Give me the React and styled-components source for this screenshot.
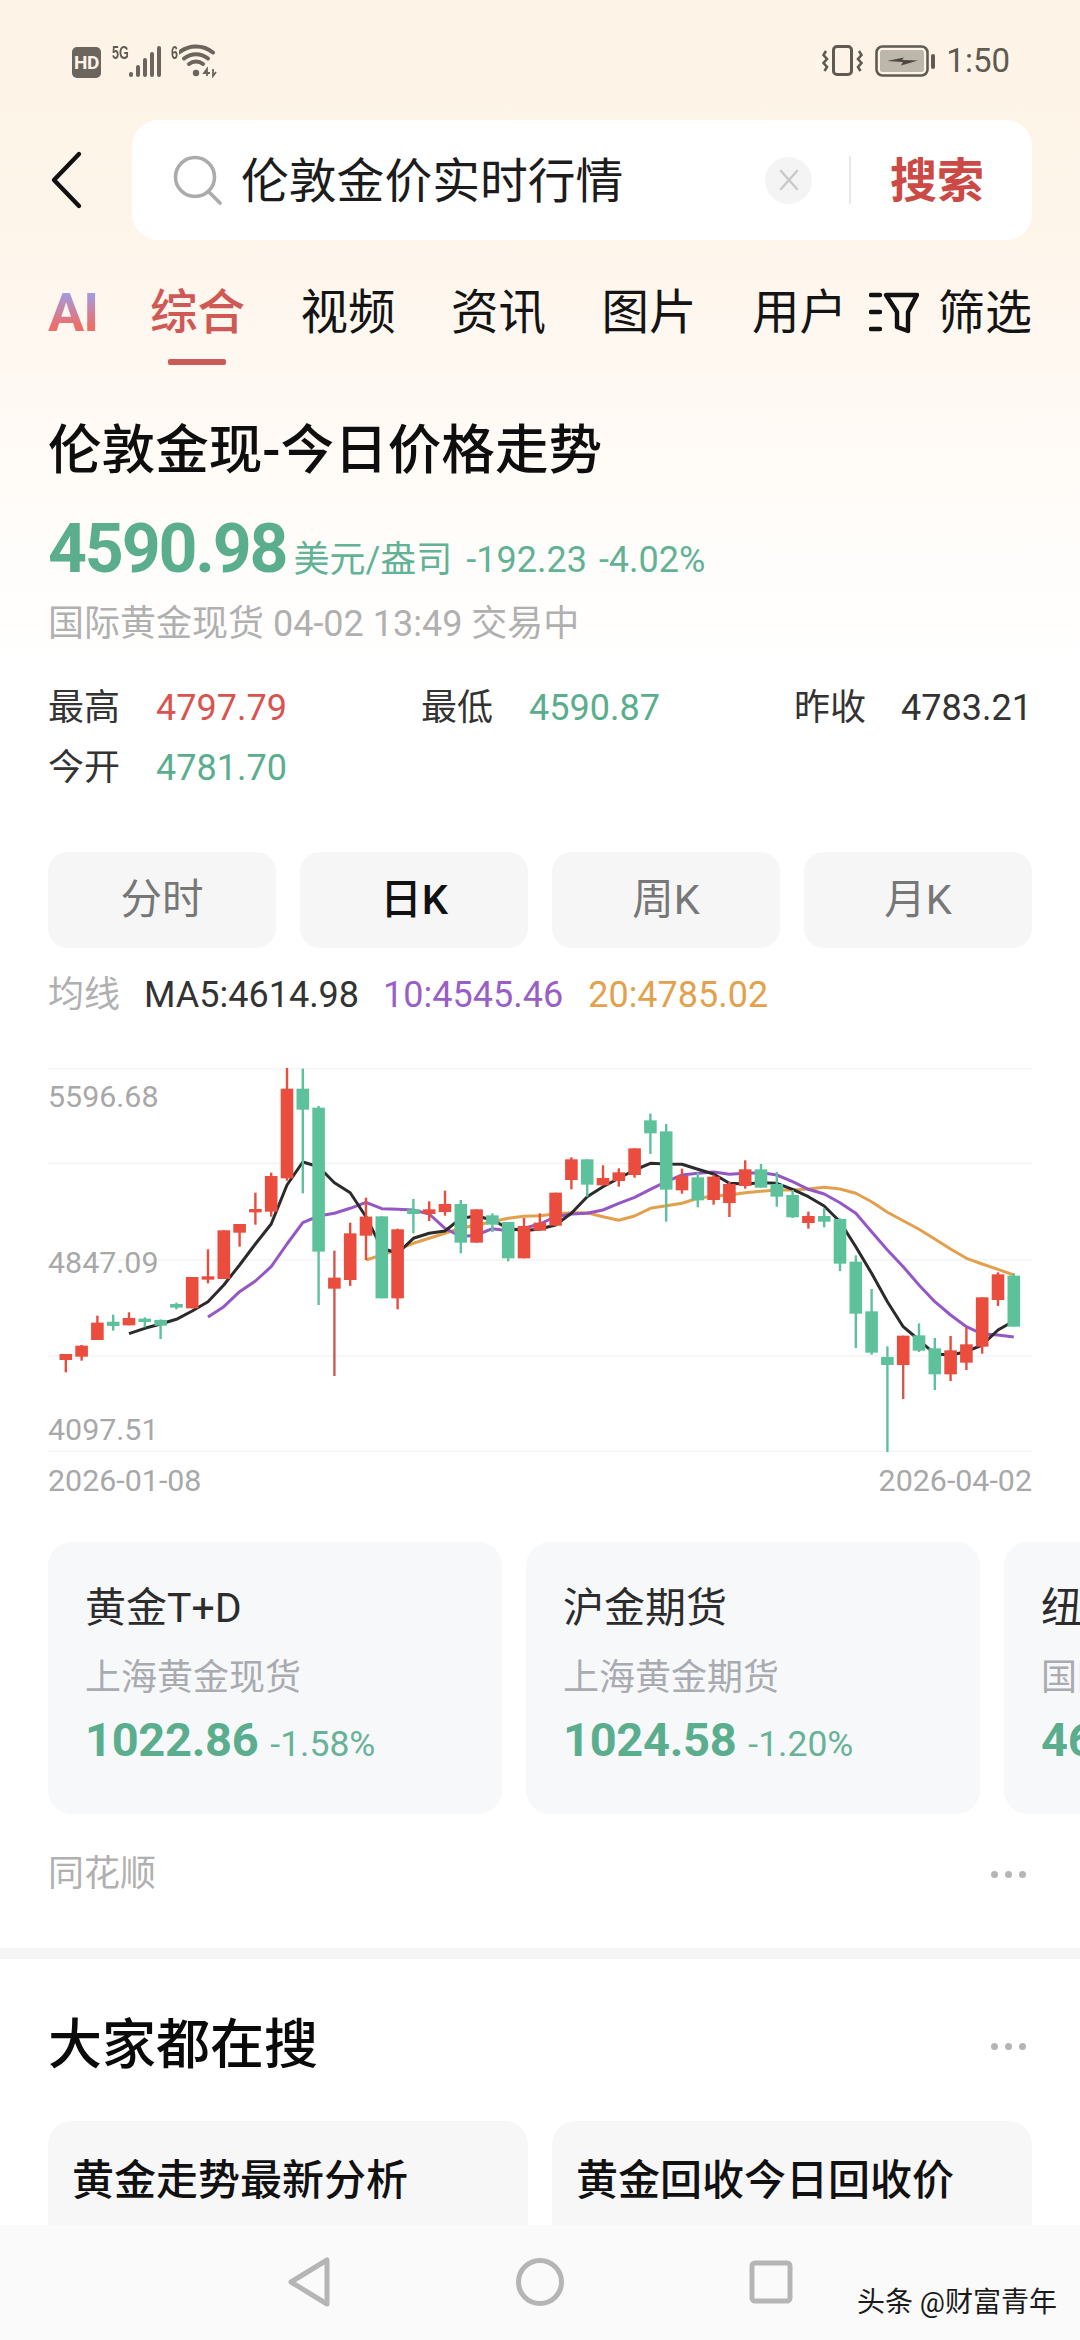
import React from "react";
import styled, { createGlobalStyle } from "styled-components";

const GlobalStyle = createGlobalStyle`
  html, body { margin: 0; padding: 0; background: #fff; }
  * { box-sizing: border-box; }
  body { font-family: Roboto, "Noto Sans CJK SC", sans-serif; }
`;

const GREEN = "#5aae8e";
const RED = "#d9534f";
const GREY = "#b0b0b0";
const STATUS = "#5f5a52";

const Page = styled.div`
  position: relative;
  width: 1080px;
  height: 2340px;
  overflow: hidden;
  background: linear-gradient(#fdf3e6 0, #fef5ea 220px, #fffaf5 430px, #fffdfb 560px, #fff 680px);
`;

const StatusBar = styled.div`
  height: 120px;
  padding: 45px 70px 0 72px;
  display: flex;
  justify-content: space-between;
  align-items: flex-start;
`;
const StatusGroup = styled.div`
  display: flex;
  align-items: flex-start;
`;
const HdBadge = styled.span`
  width: 29px;
  height: 31px;
  margin-top: 2px;
  border-radius: 5px;
  background: #6b655d;
  color: #fdf3e6;
  font: 700 19px/31px Roboto, sans-serif;
  letter-spacing: -0.5px;
  text-align: center;
`;
const TinyText = styled.span`
  font: 700 18px/16px "Liberation Sans", sans-serif;
  color: ${STATUS};
  margin-left: ${(p) => p.$left}px;
  transform: scaleX(0.7);
  transform-origin: left top;
  width: ${(p) => p.$w}px;
`;
const StatusTime = styled.span`
  font: 400 33px/32px Roboto, sans-serif;
  color: ${STATUS};
  margin-left: 10px;
`;

const SearchRow = styled.div`
  height: 120px;
  padding: 0 48px;
  display: flex;
  align-items: center;
`;
const BackButton = styled.div`
  width: 84px;
  height: 60px;
  flex: none;
`;
const SearchBox = styled.div`
  flex: 1;
  height: 120px;
  background: #fff;
  border-radius: 26px;
  display: flex;
  align-items: center;
  padding-left: 41px;
`;
const QueryText = styled.div`
  flex: 1;
  margin: 3px 0 0 18px;
  font-size: 47.8px;
  line-height: 60px;
  color: #1c1c1c;
  white-space: nowrap;
`;
const ClearButton = styled.div`
  width: 47px;
  height: 47px;
  border-radius: 50%;
  background: #f4f4f4;
  display: flex;
  align-items: center;
  justify-content: center;
`;
const SearchDivider = styled.div`
  width: 2px;
  height: 48px;
  margin-left: 37px;
  background: #e8e8e8;
`;
const SearchAction = styled.div`
  margin: 2px 48px 0 39px;
  font-size: 47px;
  line-height: 60px;
  font-weight: 700;
  color: #cc4a46;
  white-space: nowrap;
`;

const TabBar = styled.div`
  height: 146px;
  padding: 0 48px;
  display: flex;
  align-items: center;
`;
const AiTab = styled.div`
  width: 102px;
  font: 700 54px/60px Roboto, sans-serif;
  letter-spacing: -1px;
  background: linear-gradient(#9aa0ec 12%, #ee6e6a 72%);
  -webkit-background-clip: text;
  background-clip: text;
  color: transparent;
`;
const Tab = styled.div`
  position: relative;
  width: 94px;
  margin-right: ${(p) => p.$gap ?? 56.5}px;
  font-size: 47.5px;
  line-height: 60px;
  white-space: nowrap;
  color: ${(p) => (p.$active ? "#cf5a55" : "#141414")};
  font-weight: ${(p) => (p.$active ? 500 : 400)};
`;
const TabMark = styled.span`
  position: absolute;
  left: 18px;
  top: 76px;
  width: 58px;
  height: 6px;
  border-radius: 2px;
  background: #cb5b57;
`;
const FilterTab = styled.div`
  display: flex;
  align-items: center;
  margin-left: auto;
  font-size: 47px;
  line-height: 60px;
  color: #141414;
  white-space: nowrap;
`;

const Content = styled.div`
  padding: 0 48px;
`;
const Title = styled.h1`
  margin: 27px 0 0;
  font-size: 53.6px;
  line-height: 76px;
  font-weight: 500;
  color: #0e0e0e;
  white-space: nowrap;
`;
const PriceRow = styled.div`
  height: 110px;
  display: flex;
  align-items: baseline;
  padding-top: 19px;
  color: ${GREEN};
  white-space: nowrap;
`;
const Price = styled.span`
  font: 700 68px/82px Roboto, sans-serif;
  letter-spacing: -2.2px;
  margin-right: 7px;
`;
const PriceNote = styled.span`
  font-size: 36px;
  line-height: 50px;
  margin-right: ${(p) => p.$gap}px;
  color: #62b295;
`;
const SubLine = styled.div`
  font-size: 36px;
  line-height: 50px;
  color: ${GREY};
  white-space: nowrap;
`;
const Stats = styled.div`
  margin-top: 29px;
  display: grid;
  grid-template-columns: 373px 373px 1fr;
`;
const Stat = styled.div`
  display: flex;
  font-size: 36px;
  line-height: 60px;
  white-space: nowrap;
  justify-content: ${(p) => (p.$end ? "space-between" : "flex-start")};
  color: #333;
`;
const StatValue = styled.span`
  margin-left: ${(p) => (p.$end ? 0 : 36)}px;
  color: ${(p) => p.$color};
`;
const KTabs = styled.div`
  margin-top: 54px;
  display: grid;
  grid-template-columns: repeat(4, 228px);
  gap: 24px;
`;
const KTab = styled.div`
  height: 96px;
  padding-bottom: 8px;
  border-radius: 20px;
  background: #f6f6f6;
  display: flex;
  align-items: center;
  justify-content: center;
  font-size: 41.5px;
  color: ${(p) => (p.$active ? "#111" : "#777")};
  font-weight: ${(p) => (p.$active ? 500 : 400)};
`;
const MaRow = styled.div`
  margin-top: 22px;
  height: 50px;
  display: flex;
  font-size: 36px;
  line-height: 50px;
  white-space: nowrap;
`;
const MaItem = styled.span`
  color: ${(p) => p.$color};
  margin-right: ${(p) => p.$gap}px;
`;
const ChartBox = styled.div`
  position: relative;
  margin-top: 48px;
  height: 384px;
`;
const AxisLabel = styled.span`
  position: absolute;
  left: 0;
  top: ${(p) => p.$top}px;
  font-size: 30.4px;
  line-height: 36px;
  color: #a8a8a8;
`;
const DateRow = styled.div`
  margin-top: 9px;
  display: flex;
  justify-content: space-between;
  font-size: 30.4px;
  line-height: 40px;
  color: #a8a8a8;
`;
const CardStrip = styled.div`
  margin: 41px -48px 0 0;
  display: flex;
  gap: 24px;
  overflow: hidden;
`;
const QuoteCard = styled.div`
  flex: none;
  width: 454px;
  height: 272px;
  padding: 41px 0 0 37px;
  border-radius: 24px;
  background: #f7f8fa;
  white-space: nowrap;
`;
const QuoteTitle = styled.div`
  font-size: 41px;
  line-height: 50px;
  color: #2c2c2c;
`;
const QuoteSub = styled.div`
  margin-top: 20px;
  font-size: 36px;
  line-height: 50px;
  color: #a9abb0;
`;
const QuoteLine = styled.div`
  margin-top: 6px;
  display: flex;
  align-items: baseline;
  line-height: 62px;
  color: ${GREEN};
`;
const QuoteValue = styled.span`
  font-size: 47px;
  font-weight: 700;
  letter-spacing: -0.3px;
`;
const QuoteChange = styled.span`
  margin-left: 12px;
  font-size: 35.5px;
  color: #68b398;
`;
const SourceRow = styled.div`
  margin-top: 35px;
  height: 50px;
  display: flex;
  align-items: center;
  justify-content: space-between;
  font-size: 36px;
  line-height: 50px;
  color: #b0b0b0;
`;
const Dots = styled.div`
  display: flex;
  gap: 7px;
  margin-right: 6px;
`;
const Dot = styled.i`
  width: 7px;
  height: 7px;
  border-radius: 50%;
  background: #b5b5b5;
`;
const SectionGap = styled.div`
  margin-top: 49px;
  height: 11px;
  background: #f5f5f5;
`;
const SectionHead = styled.div`
  margin-top: 49px;
  height: 76px;
  display: flex;
  align-items: center;
  justify-content: space-between;
`;
const SectionTitle = styled.h2`
  margin: 0;
  font-size: 54px;
  line-height: 76px;
  font-weight: 500;
  color: #0a0a0a;
`;
const HotGrid = styled.div`
  margin-top: 37px;
  display: grid;
  grid-template-columns: 480px 480px;
  gap: 24px;
`;
const HotCard = styled.div`
  height: 190px;
  padding: 36px 0 0 24px;
  border-radius: 24px;
  background: #f7f7f7;
  font-size: 42px;
  line-height: 48px;
  font-weight: 500;
  color: #111;
  white-space: nowrap;
`;
const NavBar = styled.div`
  position: absolute;
  left: 0;
  right: 0;
  bottom: 0;
  height: 115px;
  background: #fafafa;
  display: flex;
  align-items: center;
  justify-content: center;
  gap: 183px;
  padding-bottom: 1px;
`;
const Watermark = styled.div`
  position: absolute;
  right: 23px;
  bottom: 17px;
  font-size: 28px;
  line-height: 40px;
  color: #1a1a1a;
  text-shadow: 0 0 2px #fff;
  white-space: nowrap;
`;

/* [color, wickTop, bodyTop, bodyBottom, wickBottom] in chart-scan units */
const candles = [
  ["r",942,942,960,997],["r",915,917,950,962],["r",827,848,900,900],["g",824,845,858,872],["r",817,834,856,856],
  ["g",832,836,846,862],["g",838,840,857,897],["g",788,792,803,808],["r",711,711,805,805],["r",628,709,719,730],
  ["r",571,571,717,717],["r",552,552,578,620],["r",458,507,517,554],["r",398,408,515,530],["r",84,146,415,422],
  ["g",86,146,209,460],["g",198,203,635,795],["r",632,713,746,1008],["r",548,580,720,738],["r",473,530,587,660],
  ["g",529,529,775,775],["r",566,568,775,808],["g",477,508,522,580],["r",484,508,522,543],["r",452,492,516,527],
  ["g",480,492,608,640],["r",508,508,608,608],["g",520,526,554,576],["g",546,546,655,664],["r",534,558,655,655],
  ["r",520,548,572,572],["r",458,458,557,557],["r",352,358,420,448],["g",358,358,434,470],["r",376,414,436,436],
  ["r",385,397,423,440],["r",325,325,405,413],["g",221,241,280,342],["g",252,274,449,545],["r",386,408,451,461],
  ["g",398,412,481,502],["r",404,410,480,494],["r",425,432,489,531],["r",361,388,438,446],["g",372,388,443,443],
  ["g",396,432,470,500],["g",450,465,532,534],["r",515,528,549,566],["g",505,528,545,562],["g",535,537,671,693],
  ["g",646,665,821,924],["g",747,814,938,944],["g",919,951,975,1236],["r",887,887,975,1077],["g",850,886,932,936],
  ["g",894,925,1003,1050],["r",888,931,1003,1023],["r",863,913,968,990],["r",772,772,920,941],["r",697,703,780,798],
  ["g",700,707,860,860],
];
const ma5 = [881,865,852,838,813,785,735,675,612,552,435,366,380,428,458,530,625,640,595,580,573,535,528,540,565,572,567,555,520,470,440,415,390,370,372,373,388,402,430,432,428,430,448,470,498,545,620,700,785,860,900,942,945,935,915,870,843];
const ma10 = [831,800,755,723,680,612,548,528,520,505,487,506,508,510,522,565,590,585,566,572,565,552,530,522,520,510,490,472,448,425,405,400,396,403,400,398,405,425,448,462,488,520,575,630,680,735,785,825,860,882,885,891];
const ma20 = [660,645,628,610,595,580,565,555,545,535,529,527,522,518,518,530,541,528,505,497,490,475,468,465,458,454,450,450,447,442,447,460,485,517,542,568,597,627,655,672,688,705];

const cx = (i) => 17.8 + i * 15.8;
const cy = (p) => p / 3 - 28;
const linePoints = (vals, start) => vals.map((v, i) => `${cx(start + i).toFixed(1)},${cy(v).toFixed(1)}`).join(" ");
const GRID = [0.5, 95.5, 192, 288, 383.5];

const CandleChart = () => (
  <svg width="984" height="384" viewBox="0 0 984 384" style={{ display: "block" }}>
    {GRID.map((y) => (
      <line key={y} x1="0" x2="984" y1={y} y2={y} stroke="#f3f3f3" strokeWidth="1.5" />
    ))}
    <polyline points={linePoints(ma20, 19)} fill="none" stroke="#e3a04c" strokeWidth="3" strokeLinejoin="round" />
    <polyline points={linePoints(ma10, 9)} fill="none" stroke="#9557c4" strokeWidth="3" strokeLinejoin="round" />
    <polyline points={linePoints(ma5, 4)} fill="none" stroke="#2b2b2b" strokeWidth="3" strokeLinejoin="round" />
    {candles.map(([c, wt, bt, bb, wb], i) => {
      const fill = c === "r" ? "#ea4c3d" : "#5dc29c";
      return (
        <g key={i} fill={fill}>
          <rect x={cx(i) - 1.2} y={cy(wt)} width="2.4" height={(wb - wt) / 3} fill={wb - bb > 80 && c === "r" ? "#cf5a55" : fill} />
          <rect x={cx(i) - 6.3} y={cy(bt)} width="12.6" height={(bb - bt) / 3} />
        </g>
      );
    })}
  </svg>
);

const MoreDots = () => (
  <Dots>
    <Dot />
    <Dot />
    <Dot />
  </Dots>
);

const quotes = [
  ["黄金T+D", "上海黄金现货", "1022.86", "-1.58%"],
  ["沪金期货", "上海黄金期货", "1024.58", "-1.20%"],
  ["纽约期金", "国际黄金期货", "4620.50", "-3.44%"],
];

export default function App() {
  return (
    <Page>
      <GlobalStyle />
      <StatusBar>
        <StatusGroup>
          <HdBadge>HD</HdBadge>
          <TinyText $left={11} $w={16}>5G</TinyText>
          <svg width="34" height="32" viewBox="0 0 34 32" style={{ marginTop: 1 }}>
            <g stroke="#6b655d" strokeWidth="4" strokeLinecap="round">
              <line x1="3" y1="28" x2="3" y2="29" />
              <line x1="10" y1="21" x2="10" y2="29" />
              <line x1="17" y1="14" x2="17" y2="29" />
              <line x1="24" y1="8" x2="24" y2="29" />
              <line x1="31" y1="2" x2="31" y2="29" />
            </g>
          </svg>
          <TinyText $left={9} $w={8}>6</TinyText>
          <svg width="40" height="34" viewBox="0 0 40 34" style={{ marginTop: -1 }}>
            <g fill="none" stroke="#6b655d" strokeWidth="4" strokeLinecap="round">
              <path d="M0 8.5A27 27 0 0 1 34 8.5" />
              <path d="M5 14.5A19 19 0 0 1 29 14.5" />
              <path d="M10 20A11.5 11.5 0 0 1 24 20" />
            </g>
            <circle cx="17" cy="29" r="3.2" fill="#6b655d" />
            <path d="M28 32V25L25 29H31M34 25V32L37 28" fill="none" stroke="#6b655d" strokeWidth="1.8" />
          </svg>
        </StatusGroup>
        <StatusGroup>
          <svg width="41" height="32" viewBox="0 0 41 32">
            <rect x="11.5" y="1.5" width="18" height="28" rx="3.5" fill="none" stroke={STATUS} strokeWidth="3" />
            <path d="M4 6L1.5 10L5 14L1.5 18L5 22L2.5 26M37 6L39.5 10L36 14L39.5 18L36 22L38.5 26" fill="none" stroke={STATUS} strokeWidth="2.6" />
          </svg>
          <svg width="61" height="32" viewBox="0 0 61 32" style={{ marginLeft: 12 }}>
            <rect x="1.5" y="1.5" width="51" height="29" rx="6" fill="none" stroke={STATUS} strokeWidth="2.6" />
            <rect x="5" y="5" width="44" height="22" rx="2.5" fill="#bdb7ab" />
            <path d="M12 16L29 12.5L27 15L43 15.5L26 20.5L28 17Z" fill="#4a463f" />
            <rect x="56" y="9" width="4" height="15" rx="2" fill={STATUS} />
          </svg>
          <StatusTime>1:50</StatusTime>
        </StatusGroup>
      </StatusBar>

      <SearchRow>
        <BackButton>
          <svg width="84" height="60" viewBox="0 0 84 60">
            <path d="M31 4L6 30L31 56" fill="none" stroke="#111" strokeWidth="4.4" strokeLinecap="round" strokeLinejoin="round" />
          </svg>
        </BackButton>
        <SearchBox>
          <svg width="50" height="50" viewBox="0 0 50 50" style={{ flex: "none" }}>
            <circle cx="22" cy="22" r="19.5" fill="none" stroke="#ababab" strokeWidth="3.6" />
            <path d="M36 37L47 48" stroke="#ababab" strokeWidth="3.6" strokeLinecap="round" />
          </svg>
          <QueryText>伦敦金价实时行情</QueryText>
          <ClearButton>
            <svg width="20" height="22" viewBox="0 0 20 22">
              <path d="M2 2L18 20M18 2L2 20" stroke="#c9c9c9" strokeWidth="2.4" strokeLinecap="round" />
            </svg>
          </ClearButton>
          <SearchDivider />
          <SearchAction>搜索</SearchAction>
        </SearchBox>
      </SearchRow>

      <TabBar>
        <AiTab>AI</AiTab>
        <Tab $active>
          综合
          <TabMark />
        </Tab>
        <Tab>视频</Tab>
        <Tab>资讯</Tab>
        <Tab>图片</Tab>
        <Tab $gap={0}>用户</Tab>
        <FilterTab>
          <svg width="50" height="42" viewBox="0 0 50 42" style={{ marginRight: 19 }}>
            <g stroke="#111" strokeWidth="4.4" strokeLinecap="round" fill="none" strokeLinejoin="round">
              <path d="M2 3H11M2 20H11M2 37H11" />
              <path d="M17 3H48L39 20V39L28 35V20Z" />
            </g>
          </svg>
          筛选
        </FilterTab>
      </TabBar>

      <Content>
        <Title>伦敦金现-今日价格走势</Title>
        <PriceRow>
          <Price>4590.98</Price>
          <PriceNote $gap={14}>美元/盎司</PriceNote>
          <PriceNote $gap={12}>-192.23</PriceNote>
          <PriceNote $gap={0}>-4.02%</PriceNote>
        </PriceRow>
        <SubLine>国际黄金现货 04-02 13:49 交易中</SubLine>
        <Stats>
          <Stat>最高<StatValue $color={RED}>4797.79</StatValue></Stat>
          <Stat>最低<StatValue $color={GREEN}>4590.87</StatValue></Stat>
          <Stat $end>昨收<StatValue $end $color="#333">4783.21</StatValue></Stat>
          <Stat>今开<StatValue $color={GREEN}>4781.70</StatValue></Stat>
        </Stats>
        <KTabs>
          <KTab>分时</KTab>
          <KTab $active>日K</KTab>
          <KTab>周K</KTab>
          <KTab>月K</KTab>
        </KTabs>
        <MaRow>
          <MaItem $color="#b0b0b0" $gap={24}>均线</MaItem>
          <MaItem $color="#333" $gap={24}>MA5:4614.98</MaItem>
          <MaItem $color="#9a5fc6" $gap={25}>10:4545.46</MaItem>
          <MaItem $color="#e2a24d" $gap={0}>20:4785.02</MaItem>
        </MaRow>
        <ChartBox>
          <CandleChart />
          <AxisLabel $top={11}>5596.68</AxisLabel>
          <AxisLabel $top={177}>4847.09</AxisLabel>
          <AxisLabel $top={344}>4097.51</AxisLabel>
        </ChartBox>
        <DateRow>
          <span>2026-01-08</span>
          <span>2026-04-02</span>
        </DateRow>
        <CardStrip>
          {quotes.map(([t, s, v, c]) => (
            <QuoteCard key={t}>
              <QuoteTitle>{t}</QuoteTitle>
              <QuoteSub>{s}</QuoteSub>
              <QuoteLine>
                <QuoteValue>{v}</QuoteValue>
                <QuoteChange>{c}</QuoteChange>
              </QuoteLine>
            </QuoteCard>
          ))}
        </CardStrip>
        <SourceRow>
          同花顺
          <MoreDots />
        </SourceRow>
      </Content>
      <SectionGap />
      <Content>
        <SectionHead>
          <SectionTitle>大家都在搜</SectionTitle>
          <MoreDots />
        </SectionHead>
        <HotGrid>
          <HotCard>黄金走势最新分析</HotCard>
          <HotCard>黄金回收今日回收价</HotCard>
        </HotGrid>
      </Content>

      <NavBar>
        <svg width="48" height="52" viewBox="0 0 48 52">
          <path d="M42 4V48L6 26Z" fill="none" stroke="#b5b5b5" strokeWidth="5" strokeLinejoin="round" />
        </svg>
        <svg width="48" height="52" viewBox="0 0 48 52">
          <circle cx="24" cy="26" r="21.5" fill="none" stroke="#b5b5b5" strokeWidth="5" />
        </svg>
        <svg width="48" height="52" viewBox="0 0 48 52">
          <rect x="5" y="7" width="38" height="38" rx="3" fill="none" stroke="#b5b5b5" strokeWidth="5" />
        </svg>
      </NavBar>
      <Watermark>头条 @财富青年</Watermark>
    </Page>
  );
}
